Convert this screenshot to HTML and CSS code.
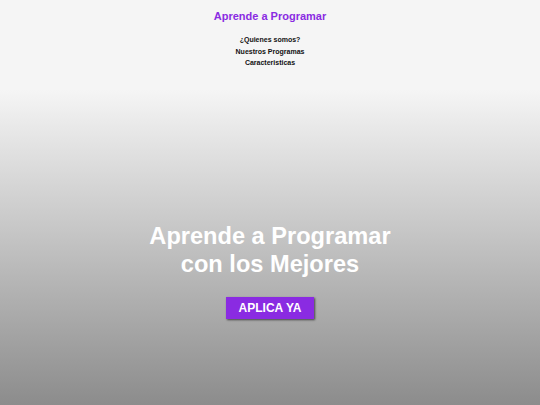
FILE: index.html
```html
<!DOCTYPE html>
<html lang="es">
<head>
<meta charset="utf-8">
<title>Aprende a Programar</title>
<link rel="stylesheet" href="styles.css">
</head>
<body>
<header class="site-header">
  <h1 class="brand">Aprende a Programar</h1>
  <nav class="nav">
    <a href="#" class="nav-link">¿Quienes somos?</a>
    <a href="#" class="nav-link">Nuestros Programas</a>
    <a href="#" class="nav-link">Caracteristicas</a>
  </nav>
</header>
<section class="hero">
  <h2 class="hero-title">Aprende a Programar<br>con los Mejores</h2>
  <a href="#" class="cta">APLICA YA</a>
</section>
</body>
</html>
```
FILE: styles.css
```css
html, body {
  margin: 0;
  padding: 0;
}
body {
  font-family: "Liberation Sans", Arial, sans-serif;
  background: #f5f5f5;
}
.site-header {
  height: 90px;
  padding-top: 9px;
  box-sizing: border-box;
  text-align: center;
  background: #f5f5f5;
}
.brand {
  margin: 0;
  font-size: 11px;
  line-height: 14px;
  color: #8a2be2;
  font-weight: bold;
}
.nav {
  display: flex;
  flex-direction: column;
  align-items: center;
  margin-top: 11px;
}
.nav-link {
  font-size: 7px;
  line-height: 11.5px;
  font-weight: bold;
  color: #111;
  text-decoration: none;
}
.hero {
  height: 315px;
  box-sizing: border-box;
  padding-top: 132px;
  display: flex;
  flex-direction: column;
  align-items: center;
  background: linear-gradient(to bottom, #f5f5f5 0%, #8c8c8c 100%);
}
.hero-title {
  margin: 0;
  color: #fff;
  font-size: 23.6px;
  line-height: 28px;
  font-weight: bold;
  text-align: center;
}
.cta {
  margin-top: 19px;
  display: block;
  width: 88px;
  height: 22px;
  line-height: 22px;
  text-align: center;
  background: #8a2be2;
  color: #fff;
  font-weight: bold;
  font-size: 12px;
  text-decoration: none;
  box-shadow: 1px 1px 2px rgba(0,0,0,0.6);
}
```
